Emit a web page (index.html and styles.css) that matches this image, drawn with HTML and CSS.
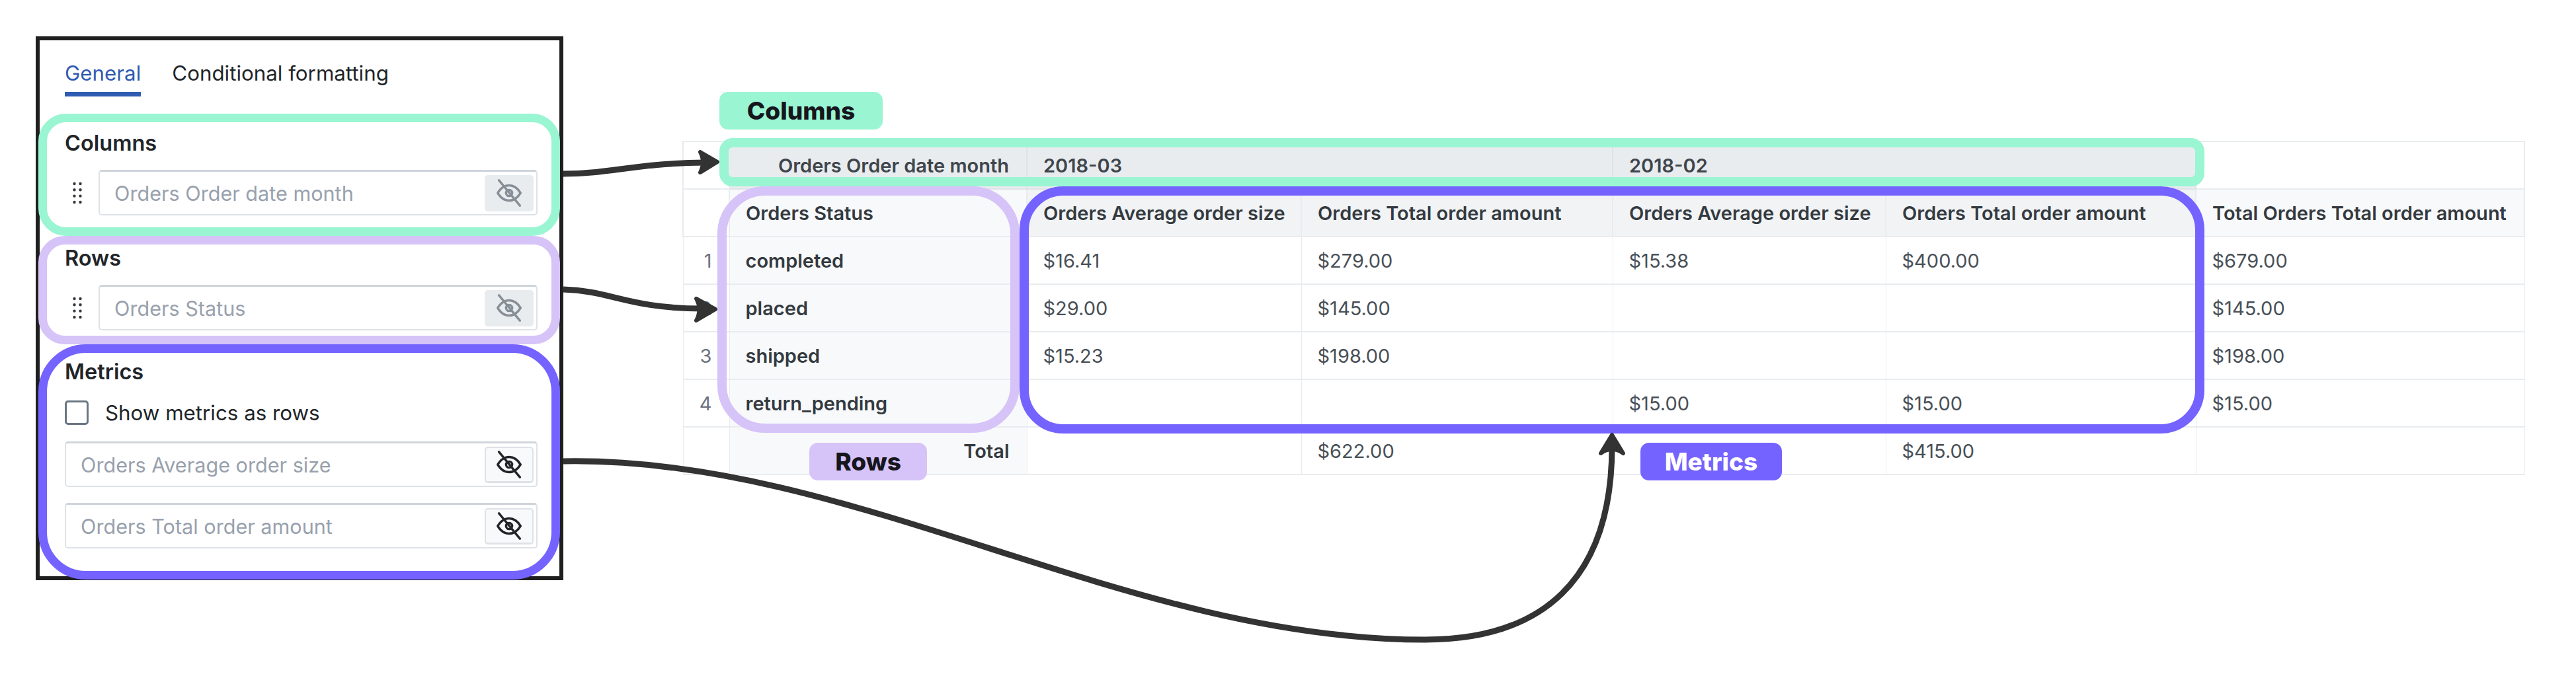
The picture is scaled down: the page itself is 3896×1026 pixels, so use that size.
FILE: index.html
```html
<!DOCTYPE html>
<html lang="en">
<head>
  <meta charset="UTF-8" />
  <title>Pivot table configuration</title>
  <link rel="stylesheet" href="styles.css">
</head>
<body>
  <svg width="0" height="0" class="defs">
    <symbol id="eye-off" viewBox="0 0 24 24">
      <path d="M3 12c2.4-4 5.4-6 9-6s6.6 2 9 6c-2.4 4-5.4 6-9 6s-6.6-2-9-6z"/>
      <circle cx="12" cy="12" r="2.4"/>
      <path d="M4 2l16.500 20"/>
    </symbol>
    <symbol id="grip" viewBox="0 0 14 34">
      <circle cx="2.500" cy="3" r="2.200"/><circle cx="11.500" cy="3" r="2.200"/>
      <circle cx="2.500" cy="12.300" r="2.200"/><circle cx="11.500" cy="12.300" r="2.200"/>
      <circle cx="2.500" cy="21.600" r="2.200"/><circle cx="11.500" cy="21.600" r="2.200"/>
      <circle cx="2.500" cy="31" r="2.200"/><circle cx="11.500" cy="31" r="2.200"/>
    </symbol>
  </svg>

  <div class="page">
    <div class="panel">
      <div class="tabs">
        <span class="tab active">General</span>
        <span class="tab">Conditional formatting</span>
      </div>

      <section class="group group-columns">
        <h3>Columns</h3>
        <div class="field-row">
          <svg class="grip"><use href="#grip"/></svg>
          <div class="field">
            <span>Orders Order date month</span>
            <button class="eye muted"><svg><use href="#eye-off"/></svg></button>
          </div>
        </div>
      </section>

      <section class="group group-rows">
        <h3>Rows</h3>
        <div class="field-row">
          <svg class="grip"><use href="#grip"/></svg>
          <div class="field">
            <span>Orders Status</span>
            <button class="eye muted"><svg><use href="#eye-off"/></svg></button>
          </div>
        </div>
      </section>

      <section class="group group-metrics">
        <h3>Metrics</h3>
        <label class="check"><span class="box"></span>Show metrics as rows</label>
        <div class="field">
          <span>Orders Average order size</span>
          <button class="eye"><svg><use href="#eye-off"/></svg></button>
        </div>
        <div class="field">
          <span>Orders Total order amount</span>
          <button class="eye"><svg><use href="#eye-off"/></svg></button>
        </div>
      </section>
    </div>

    <div class="table-wrap">
      <table>
        <colgroup>
          <col class="c-num"><col class="c-dim"><col class="c-a"><col class="c-b"><col class="c-c"><col class="c-d"><col class="c-e">
        </colgroup>
        <thead>
          <tr class="row-pivot">
            <th class="blank"></th>
            <th class="right">Orders Order date month</th>
            <th colspan="2">2018-03</th>
            <th colspan="2">2018-02</th>
            <th class="blank"></th>
          </tr>
          <tr class="row-head">
            <th class="blank"></th>
            <th class="light">Orders Status</th>
            <th>Orders Average order size</th>
            <th>Orders Total order amount</th>
            <th>Orders Average order size</th>
            <th>Orders Total order amount</th>
            <th class="light">Total Orders Total order amount</th>
          </tr>
        </thead>
        <tbody>
          <tr><td class="num">1</td><th class="light">completed</th><td>$16.41</td><td>$279.00</td><td>$15.38</td><td>$400.00</td><td>$679.00</td></tr>
          <tr><td class="num">2</td><th class="light">placed</th><td>$29.00</td><td>$145.00</td><td></td><td></td><td>$145.00</td></tr>
          <tr><td class="num">3</td><th class="light">shipped</th><td>$15.23</td><td>$198.00</td><td></td><td></td><td>$198.00</td></tr>
          <tr><td class="num">4</td><th class="light">return_pending</th><td></td><td></td><td>$15.00</td><td>$15.00</td><td>$15.00</td></tr>
          <tr class="row-total"><td class="num"></td><th class="light right">Total</th><td></td><td>$622.00</td><td></td><td>$415.00</td><td></td></tr>
        </tbody>
      </table>

      <div class="mark mark-columns"></div>
      <div class="mark mark-rows"></div>
      <div class="mark mark-metrics"></div>
      <div class="tag tag-columns">Columns</div>
      <div class="tag tag-rows">Rows</div>
      <div class="tag tag-metrics">Metrics</div>
    </div>
  </div>

  <svg class="arrows" width="3896" height="1026" viewBox="0 0 3896 1026">
    <path class="line" d="M852 263C925 263 960 247 1066 246"/>
    <path class="head" d="M1085 245L1059 230Q1067 245 1059 261Z"/>
    <path class="line" d="M852 438C925 440 950 467 1064 467"/>
    <path class="head" d="M1082 468L1053 452Q1062 468 1053 485Z"/>
    <path class="line" d="M852 698C1290 690 1700 968 2155 968C2330 968 2438 880 2438 675"/>
    <path class="head" d="M2438 658L2421 686Q2438 674 2455 686Z"/>
  </svg>
</body>
</html>
```

FILE: styles.css
```css
* { box-sizing: border-box; margin:0; padding:0; }
body {
  font-family: Inter, 'Liberation Sans', sans-serif;
  background:#fff; color:#212529;
  width:3896px; height:1026px; overflow:hidden;
  position:relative;
}
.defs { position:absolute; }
.page {
  display:flex; align-items:flex-start;
  padding:55px 0 0 54px;
}

/* left settings panel */
.panel {
  width:798px; height:823px; flex:none;
  border:6px solid #1f1f1f;
  background:#fff;
  margin-right:180px;
  padding:32px 0 0;
}
.tabs {
  display:flex; gap:47px;
  padding:0 0 0 38px;
  height:79px;
}
.tab {
  font-size:31.300px; line-height:37px;
  height:53px; color:#212529;
}
.tab.active {
  color:#2f5bb0;
  border-bottom:7px solid #2f5bb0;
}
.group {
  margin:0 -1px 0 -2px;
  border:13px solid #9af5d2;
  padding:0 21px 0 27px;
}
.group h3 {
  font-size:32.500px; font-weight:600; line-height:36px;
  color:#212529;
}
.group-columns { height:185px; border-radius:42px; padding-top:14px; }
.group-columns h3 { margin-bottom:22px; }
.group-rows { height:164px; border-color:#d6c3f8; border-radius:40px; padding-top:3px; }
.group-rows h3 { margin-bottom:22px; }
.group-metrics {
  height:356px; border-color:#7563ff; border-radius:72px;
  padding-top:11px;
}
.field-row { display:flex; align-items:center; gap:25px; padding-left:12px; }
.grip { width:14px; height:34px; flex:none; fill:#343a40; }
.field {
  flex:1; height:69px;
  border:2px solid #dee2e6;
  border-top:3px solid #ced4da;
  border-radius:5px;
  display:flex; align-items:center; justify-content:space-between;
  padding:0 4px 0 22px;
  font-size:30.600px; color:#98a1ad;
  background:#fff;
}
.eye {
  width:74px; height:55px;
  display:flex; align-items:center; justify-content:center;
  background:#f8f9fa;
  border:2px solid #dee2e6;
  border-bottom-width:3px;
  border-radius:5px;
  color:#212529;
}
.eye.muted { background:#e9ecef; border:none; color:#868e96; }
.eye svg {
  width:46px; height:46px;
  fill:none; stroke:currentColor; stroke-width:1.800;
  stroke-linecap:round; stroke-linejoin:round;
}
.check {
  display:flex; align-items:center; gap:25px;
  font-size:31.300px; color:#212529;
  margin:25px 0 25px;
  height:37px;
}
.box {
  width:36px; height:37px;
  border:3px solid #6b7683; border-radius:5px;
}
.group-metrics .field + .field { margin-top:24px; }

/* pivot table */
.table-wrap { position:relative; margin-top:158px; flex:none; }
table {
  width:2785px; table-layout:fixed;
  border-collapse:collapse;
  font-size:29px; color:#495057;
}
.c-num { width:70px; }
.c-dim { width:450px; }
.c-a { width:415px; }
.c-b { width:471px; }
.c-c { width:413px; }
.c-d { width:469px; }
.c-e { width:497px; }
tr { height:72px; }
th, td {
  border:2px solid #e9ecef;
  padding:0 0 0 24px;
  text-align:left; white-space:nowrap;
  font-weight:400;
}
th { font-weight:600; color:#343a40; }
.row-pivot th { background:#e9ecef; border-color:#e0e3e6; color:#3f454b; }
.row-head th { background:#f1f3f5; }
th.light, .row-head th.light { background:#f8f9fa; }
th.blank, .row-head th.blank { background:#fff; border-color:#e9ecef; }
th.right { text-align:right; padding:0 26px 0 0; }
.num { text-align:right; padding:0 26px 0 0; color:#6b7280; }
td, tbody th { border-left-width:1px; border-right-width:1px; }

/* annotations over the table */
.mark {
  position:absolute;
  border:14px solid #9af5d2;
}
.mark-columns { left:56px; top:-4px; width:2246px; height:73px; border-radius:20px; }
.mark-rows { left:53px; top:69px; width:457px; height:373px; border-color:#d6c3f8; border-radius:72px; }
.mark-metrics { left:510px; top:69px; width:1792px; height:374px; border-color:#7563ff; border-radius:66px; }
.tag {
  position:absolute;
  height:57px;
  border-radius:13px;
  display:flex; align-items:center; justify-content:center;
  font-size:37px; font-weight:800; color:#16161d;
}
.tag-columns { left:56px; top:-74px; width:247px; background:#9af5d2; }
.tag-rows { left:192px; top:457px; width:178px; background:#d6c3f8; }
.tag-metrics { left:1449px; top:457px; width:214px; background:#7563ff; color:#fff; }

/* connector arrows */
.arrows { position:absolute; left:0; top:0; pointer-events:none; }
.line { fill:none; stroke:#333; stroke-width:9; }
.head { fill:#333; stroke:#333; stroke-width:6; stroke-linejoin:round; }
```
